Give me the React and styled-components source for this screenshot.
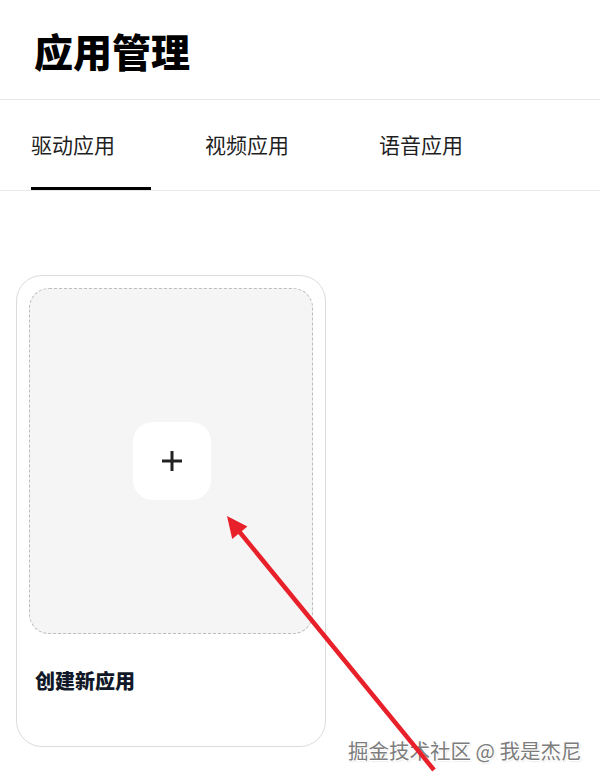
import styled, { createGlobalStyle } from "styled-components";
import { useState } from "react";

const Global = createGlobalStyle`
body{
  margin:0;
  background:#fff;
  font-family:"Noto Sans CJK SC","Noto Sans",sans-serif;
}
`;

const Page = styled.div`
position:relative;
width:600px;
height:783px;
overflow:hidden;
`;

const Header = styled.div`
height:99px;
display:flex;
align-items:center;
padding-left:34px;
border-bottom:1px solid #e8e8e8;
`;

const Title = styled.h1`
margin:0;
font-size:39px;
font-weight:900;
color:#000;
`;

const Tabs = styled.div`
display:flex;
gap:54px;
padding-left:31px;
height:90px;
border-bottom:1px solid #e8e8e8;
`;

const Tab = styled.div`
width:120px;
box-sizing:border-box;
display:flex;
align-items:center;
padding-top:1px;
font-size:21px;
color:#1f1f1f;
cursor:pointer;
border-bottom:3px solid ${p => (p.active ? "#000" : "transparent")};
`;

const Content = styled.div`
padding:84px 0 0 16px;
`;

const Card = styled.div`
width:310px;
height:472px;
box-sizing:border-box;
border:1px solid #dcdcdc;
border-radius:26px;
padding:12px;
display:flex;
flex-direction:column;
`;

const Drop = styled.div`
height:346px;
box-sizing:border-box;
border:1px dashed #bdbdbd;
border-radius:20px;
background:#f5f5f5;
display:flex;
align-items:center;
justify-content:center;
`;

const AddBtn = styled.div`
width:78px;
height:78px;
margin-left:2px;
border-radius:20px;
background:#fff;
display:flex;
align-items:center;
justify-content:center;
`;

const Label = styled.div`
margin-top:32px;
padding:0 6px;
font-size:20px;
line-height:30px;
font-weight:900;
color:#111827;
`;

const Arrow = styled.svg`
position:absolute;
left:0;
top:0;
pointer-events:none;
`;

const Mark = styled.div`
position:absolute;
left:348px;
top:735px;
font-size:20.5px;
color:#7d7d7d;
white-space:nowrap;
text-shadow:1px 1px 0 #fff,-1px -1px 0 #fff,1px -1px 0 #fff,-1px 1px 0 #fff,1px 1px 2px rgba(0,0,0,.25);
`;

const tabs = ["驱动应用", "视频应用", "语音应用"];

export default function App() {
  const [cur, setCur] = useState(0);
  return (
    <Page>
      <Global />
      <Header>
        <Title>应用管理</Title>
      </Header>
      <Tabs>
        {tabs.map((t, i) => (
          <Tab key={t} active={i === cur ? 1 : 0} onClick={() => setCur(i)}>
            {t}
          </Tab>
        ))}
      </Tabs>
      <Content>
        <Card>
          <Drop>
            <AddBtn>
              <svg width="24" height="24" viewBox="0 0 24 24">
                <path d="M12 2v20M2 12h20" stroke="#222" strokeWidth="3" />
              </svg>
            </AddBtn>
          </Drop>
          <Label>创建新应用</Label>
        </Card>
      </Content>
      <Mark>掘金技术社区 @ 我是杰尼</Mark>
      <Arrow width="600" height="783">
        <line x1="238" y1="530" x2="434" y2="770" stroke="#e8202a" strokeWidth="4.5" />
        <polygon points="227,516 232.2,539 247.4,526.4" fill="#e8202a" />
      </Arrow>
    </Page>
  );
}
